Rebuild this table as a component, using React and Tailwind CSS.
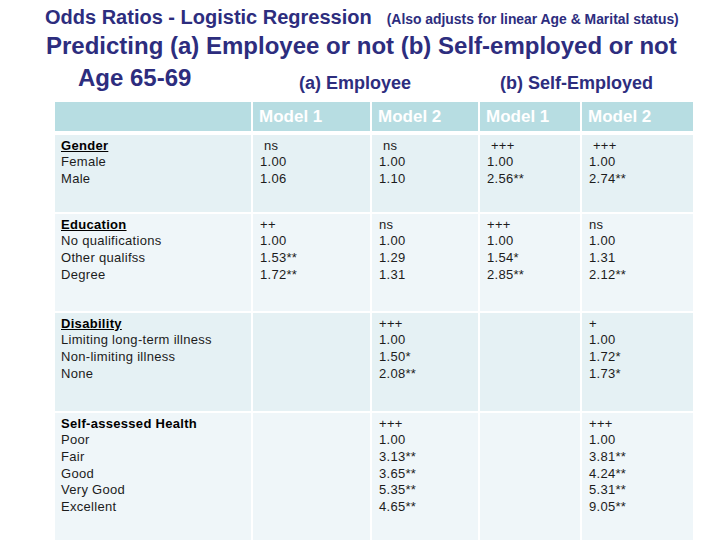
import React from 'react';

const rows = [
  {
    bg: 'bg-[#e5f1f4]',
    h: 'h-[77px]',
    title: 'Gender',
    underline: true,
    labels: ['Female', 'Male'],
    cols: [
      [' ns', '1.00', '1.06'],
      [' ns', '1.00', '1.10'],
      [' +++', '1.00', '2.56**'],
      [' +++', '1.00', '2.74**'],
    ],
  },
  {
    bg: 'bg-[#eff6f9]',
    h: 'h-[97px]',
    title: 'Education',
    underline: true,
    labels: ['No qualifications', 'Other qualifss', 'Degree'],
    cols: [
      ['++', '1.00', '1.53**', '1.72**'],
      ['ns', '1.00', '1.29', '1.31'],
      ['+++', '1.00', '1.54*', '2.85**'],
      ['ns', '1.00', '1.31', '2.12**'],
    ],
  },
  {
    bg: 'bg-[#e5f1f4]',
    h: 'h-[98px]',
    title: 'Disability',
    underline: true,
    labels: ['Limiting long-term illness', 'Non-limiting illness', 'None'],
    cols: [
      [],
      ['+++', '1.00', '1.50*', '2.08**'],
      [],
      ['+', '1.00', '1.72*', '1.73*'],
    ],
  },
  {
    bg: 'bg-[#eff6f9]',
    h: 'h-[129px]',
    title: 'Self-assessed Health',
    underline: false,
    labels: ['Poor', 'Fair', 'Good', 'Very Good', 'Excellent'],
    cols: [
      [],
      ['+++', '1.00', '3.13**', '3.65**', '5.35**', '4.65**'],
      [],
      ['+++', '1.00', '3.81**', '4.24**', '5.31**', '9.05**'],
    ],
  },
];

const heads = ['Model 1', 'Model 2', 'Model 1', 'Model 2'];

export default function App() {
  return (
    <div className="w-[720px] h-[540px] overflow-hidden bg-white font-['Liberation_Sans',Arial,sans-serif]">
      {/* titles */}
      <div className="flex items-baseline pl-[45px] pt-[6px] text-[#2d2d7e] font-bold">
        <span className="text-[20px] leading-[23px]">Odds Ratios - Logistic Regression</span>
        <span className="ml-[15px] text-[13.9px]">(Also adjusts for linear Age &amp; Marital status)</span>
      </div>
      <div className="pl-[46px] mt-[2px] text-[24px] leading-[28px] font-bold text-[#2d2d7e]">
        Predicting (a) Employee or not (b) Self-employed or not
      </div>
      <div className="flex items-end mt-[4px] h-[30px] text-[#2d2d7e] font-bold">
        <div className="w-[299px] pl-[78px] text-[24px] leading-[28px] self-start">Age 65-69</div>
        <div className="w-[201px] text-[18px] leading-[22px]">(a) Employee</div>
        <div className="text-[18px] leading-[22px]">(b) Self-Employed</div>
      </div>

      {/* table */}
      <div className="ml-[55px] mt-[8px] w-[638px] grid grid-cols-[196px_117px_106px_100px_111px] gap-x-[2px]">
        <div className="h-[29px] bg-[#b7dde2]" />
        {heads.map((t, i) => (
          <div key={i} className="h-[29px] bg-[#b7dde2] pl-[6px] flex items-center text-white font-bold text-[17px]">
            {t}
          </div>
        ))}
        <div className="col-span-5 h-[4px]" />
        {rows.map((r, ri) => (
          <React.Fragment key={ri}>
            <div className={`${r.bg} ${r.h} pl-[6px] pt-[3px] text-[13px] leading-[16.6px] tracking-[0.3px] text-[#1c1c1c]`}>
              <div className={`font-bold text-black ${r.underline ? 'underline' : ''}`}>{r.title}</div>
              {r.labels.map((l) => (
                <div key={l}>{l}</div>
              ))}
            </div>
            {r.cols.map((c, ci) => (
              <div key={ci} className={`${r.bg} ${r.h} pl-[7px] pt-[3px] text-[13px] leading-[16.6px] tracking-[0.3px] text-[#1c1c1c] whitespace-pre`}>
                {c.map((v, vi) => (
                  <div key={vi}>{v}</div>
                ))}
              </div>
            ))}
            {ri < rows.length - 1 && <div className="col-span-5 h-[2px]" />}
          </React.Fragment>
        ))}
      </div>
    </div>
  );
}
